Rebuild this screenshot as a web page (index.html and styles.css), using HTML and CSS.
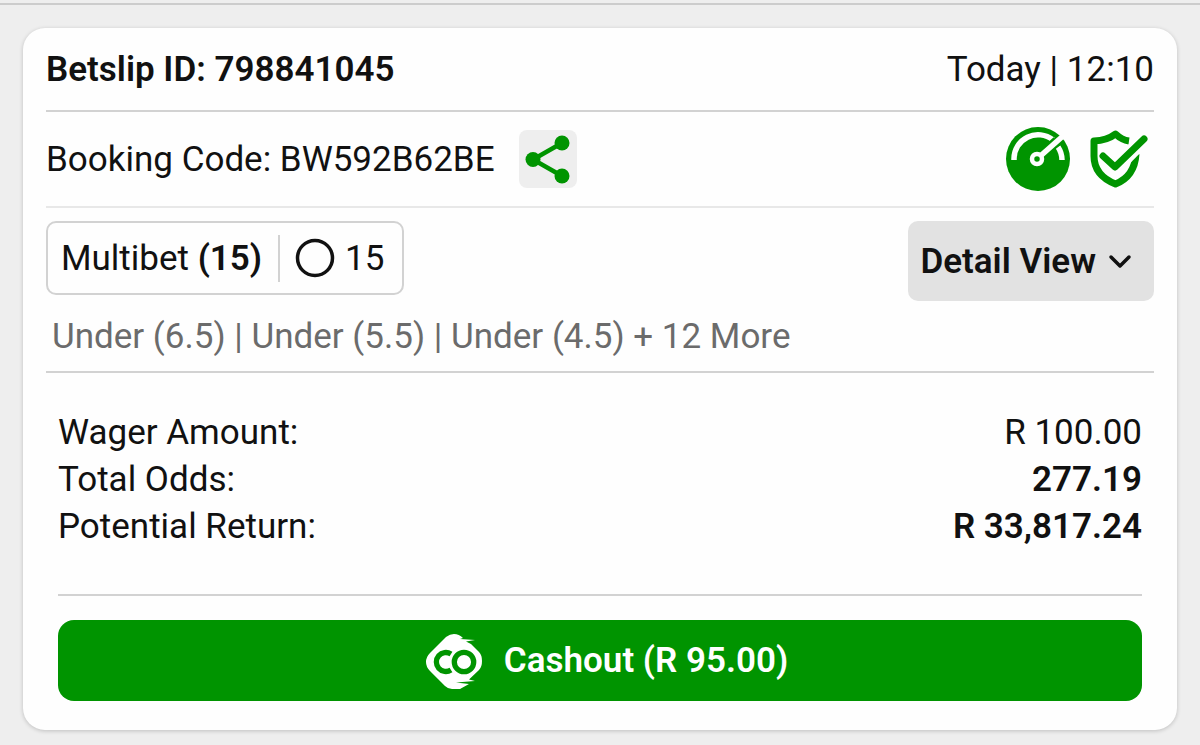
FILE: index.html
```
<!DOCTYPE html>
<html lang="en">
<head>
    <meta charset="UTF-8">
    <meta name="viewport" content="width=device-width, initial-scale=1.0">
    <title>Betslip</title>
    <link rel="stylesheet" href="styles.css">
</head>
<body>
    <main class="betslip">
        <header class="slip-header">
            <h1>Betslip ID: 798841045</h1>
            <span>Today | 12:10</span>
        </header>

        <div class="booking">
            <span>Booking Code: BW592B62BE</span>
            <button type="button" class="share-btn" aria-label="Share betslip">
                <svg width="58" height="58" viewBox="0 0 58 58" fill="#009400" stroke="#009400">
                    <path d="M43 13 L14 29.500 L43 46" fill="none" stroke-width="4.500"/>
                    <circle cx="43" cy="13" r="7.500" stroke="none"/>
                    <circle cx="14" cy="29.500" r="7.500" stroke="none"/>
                    <circle cx="43" cy="46" r="7.500" stroke="none"/>
                </svg>
            </button>
            <div class="badges">
                <!-- Gauge -->
                <svg width="64" height="64" viewBox="0 0 64 64">
                    <circle cx="32" cy="32" r="32" fill="#009400"/>
                    <path d="M8 33 V32 A24 24 0 0 1 47 13" fill="none" stroke="#fefefe" stroke-width="5.500"/>
                    <path d="M52 20 Q56 26 56 33" fill="none" stroke="#fefefe" stroke-width="5.500"/>
                    <path d="M31 32 L51 14" stroke="#009400" stroke-width="10"/>
                    <path d="M31 32 L57 9" stroke="#fefefe" stroke-width="5.500"/>
                    <circle cx="31" cy="32" r="5" fill="#009400" stroke="#fefefe" stroke-width="4.500"/>
                </svg>
                <!-- Shield with tick -->
                <svg width="58" height="64" viewBox="0 0 58 64" fill="none" stroke="#009400">
                    <path d="M39 14 Q32 13 25.500 7 Q17 13.500 4 14 V29 C4 43 13 52 25.500 57 C38 52 45 43 46 27" stroke-width="7" stroke-linejoin="round"/>
                    <path d="M25.500 41 L54 12" stroke="#fefefe" stroke-width="14"/>
                    <path d="M13 29 L25 40 L54 12" stroke-width="7" stroke-linecap="round" stroke-linejoin="round"/>
                </svg>
            </div>
        </div>

        <section class="bet">
            <div class="bet-row">
                <div class="bet-type">
                    <span>Multibet <b>(15)</b></span>
                    <span class="legs-count">
                        <svg width="40" height="40" viewBox="0 0 40 40">
                            <circle cx="20" cy="20" r="17.500" fill="none" stroke="#111" stroke-width="3.500"/>
                        </svg>
                        15
                    </span>
                </div>
                <button type="button" class="detail-btn">
                    Detail View
                    <svg width="24" height="24" viewBox="0 0 24 24" fill="none" stroke="#111" stroke-width="3.500" stroke-linecap="round" stroke-linejoin="round">
                        <path d="M3 8 L12 17 L21 8"/>
                    </svg>
                </button>
            </div>
            <p class="selections">Under (6.5) | Under (5.5) | Under (4.5) + 12 More</p>
        </section>

        <section class="summary">
            <dl>
                <div><dt>Wager Amount:</dt><dd>R 100.00</dd></div>
                <div><dt>Total Odds:</dt><dd><b>277.19</b></dd></div>
                <div><dt>Potential Return:</dt><dd><b>R 33,817.24</b></dd></div>
            </dl>
            <button type="button" class="cashout-btn">
                <svg width="56" height="58" viewBox="0 0 56 58">
                    <path d="M20 5 Q24 2 28 2 Q33 2 37 6 L34 7 L49 8 L40 9.500 L45 12 L53 20 Q56 23 56 29 Q56 35 53 38 L43 47.500 L49 49 L30 50.500 L43 52 L34 57 H26 Q22 57 19 54 L4 39 Q0 35 0 30 Q0 25 4 21 Z" fill="#fff"/>
                    <path d="M25 22 A9.500 9.500 0 1 0 25 38" fill="none" stroke="#009400" stroke-width="5.300"/>
                    <circle cx="38" cy="30" r="14" fill="#fff"/>
                    <circle cx="38" cy="30" r="9.700" fill="none" stroke="#009400" stroke-width="5.300"/>
                </svg>
                Cashout (R 95.00)
            </button>
        </section>
    </main>
</body>
</html>
```

FILE: styles.css
```
* {
    box-sizing: border-box;
}

body {
    margin: 0;
    padding: 3px 0 15px;
    background: #eee;
    color: #111;
    font-family: Roboto, sans-serif;
    font-size: 35px;
    line-height: 47px;
}

body::before {
    content: "";
    display: block;
    height: 2px;
    background: #ccc;
}

button {
    border: none;
    padding: 0;
    color: inherit;
    font: inherit;
    cursor: pointer;
}

svg {
    display: block;
    flex: none;
}

b {
    font-weight: 600;
}

.betslip {
    margin: 23px 23px 0;
    padding: 0 23px 29px;
    background: #fefefe;
    border-radius: 22px;
    box-shadow: 0 1px 4px rgba(0, 0, 0, 0.2);
}

.slip-header {
    display: flex;
    justify-content: space-between;
    align-items: center;
    height: 84px;
    border-bottom: 2px solid #d2d2d2;
}

.slip-header h1 {
    margin: 0;
    font-size: 35px;
    font-weight: 600;
}

.booking {
    display: flex;
    align-items: center;
    gap: 24px;
    height: 96px;
    border-bottom: 2px solid #e8e8e8;
}

.share-btn {
    background: #eee;
    border-radius: 8px;
}

.badges {
    display: flex;
    gap: 20px;
    margin-left: auto;
    padding-right: 6px;
}

.bet {
    padding: 13px 0 11px;
    border-bottom: 2px solid #d2d2d2;
}

.bet-row {
    display: flex;
    justify-content: space-between;
    align-items: flex-start;
}

.bet-type {
    display: flex;
    align-items: center;
    height: 74px;
    padding: 0 18px 0 13px;
    border: 2px solid #d2d2d2;
    border-radius: 10px;
}

.legs-count {
    display: flex;
    align-items: center;
    gap: 10px;
    margin-left: 16px;
    padding-left: 15px;
    border-left: 2px solid #d2d2d2;
}

.detail-btn {
    display: flex;
    align-items: center;
    gap: 12px;
    height: 80px;
    padding: 0 22px 0 12px;
    background: #e2e2e2;
    border-radius: 10px;
    font-weight: 600;
}

.selections {
    margin: 12px 0 0;
    padding-left: 6px;
    color: #6b6b6b;
}

.summary {
    padding: 36px 12px 0;
}

.summary dl {
    margin: 0;
    padding-bottom: 44px;
    border-bottom: 2px solid #d2d2d2;
}

.summary dl div {
    display: flex;
    justify-content: space-between;
}

.summary dd {
    margin: 0;
}

.cashout-btn {
    display: flex;
    justify-content: center;
    align-items: center;
    gap: 22px;
    width: 100%;
    height: 81px;
    margin-top: 24px;
    padding-left: 14px;
    background: #009400;
    border-radius: 16px;
    color: #fff;
    font-weight: 600;
}
```
